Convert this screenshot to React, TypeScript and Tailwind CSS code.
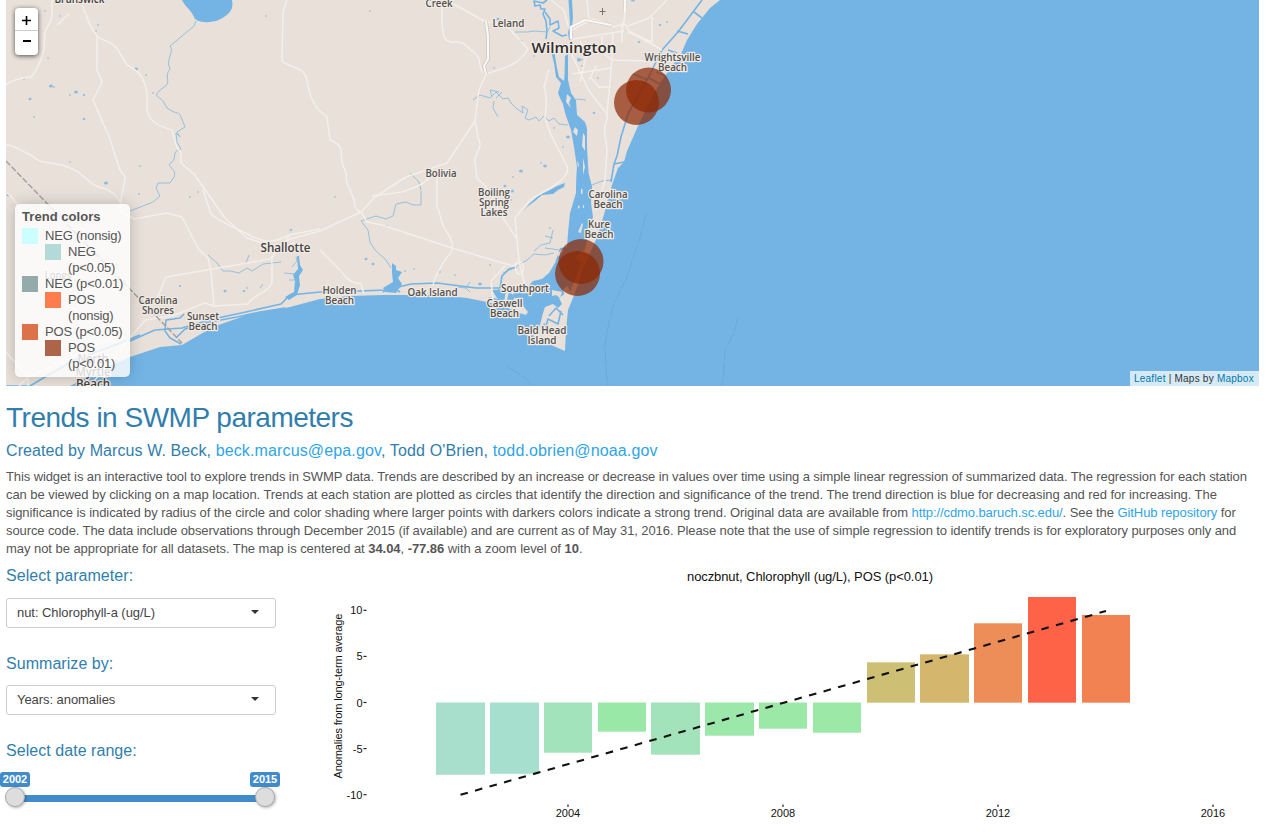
import React from "react";

const SANS = "font-['Liberation_Sans',Arial,sans-serif]";

const roads: string[] = [
  "M6 85 C14 79 18 79 31 77 C38 70 42 57 44 49 L45 32 C48 24 52 22 52 14 V0",
  "M82 5 L90 25 L97 36 C103 42 112 40 118 50 L127 65 C137 70 145 76 147 95 L147 110 C149 122 160 127 172 130 C176 140 174 147 181 152 V163 L194 174 L225 218 L247 238 L276 248 L290 239 L320 231 L361 212 L375 197 L406 177 L447 163 L475 121 L479 90 L486 74",
  "M97 36 L97 70 L102 82 L93 100 L110 139 L114 152 L120 170 L125 177 C125 188 119 196 121 212 L134 219 L167 213 L182 217 L199 250 L208 258 L211 272 L214 306 L248 304",
  "M6 145 C16 145 20 151 31 155 C41 166 54 160 70 168 C82 171 88 184 99 187 C111 190 117 195 121 204",
  "M287 0 L283 12 L282 61 C292 69 304 66 307 80 C309 94 314 106 321 112 L327 117 L330 140 C346 146 339 154 343 166 C350 177 343 181 349 187 L354 200 C355 210 359 212 361 212 L367 222 L382 225 L452 248 L513 266 L517 262",
  "M203 190 L211 214 C224 225 241 230 251 236 C264 242 272 244 289 235 L320 229",
  "M155 304 L166 277 L270 259 L290 235",
  "M248 304 C252 295 267 294 272 283 V264 C270 252 280 252 294 242",
  "M90 386 L130 338 L145 320 L172 316 L205 303 L214 306",
  "M442 6 V19 C443 32 442 42 453 42 C465 40 468 49 477 55 C482 62 477 70 486 74",
  "M452 3 L484 21 L506 25 L528 49",
  "M486 74 C499 69 518 67 528 49",
  "M475 121 L478 137 C484 150 475 149 475 162 L477 178 L486 187 L503 218 L517 239 L519 261 L525 286",
  "M517 239 L515 218 L530 200 L555 185 C563 180 570 172 567 166 L551 135 L545 118 C546 106 548 99 544 87 L549 69",
  "M437 175 V206 C441 215 440 221 445 229 C452 240 454 244 451 252 L443 263 C440 270 434 276 433 286",
  "M372 196 L402 192 C413 188 429 184 433 171",
  "M320 250 L339 269 C345 275 346 282 361 284 L364 294",
  "M505 266 L491 281 L493 300",
  "M551 0 L564 10 L568 26 L572 30 L592 19 L609 24",
  "M587 0 L589 20 M622 23 L622 43 M573 39 L624 31",
  "M612 27 L625 24 L629 31 L662 50",
  "M667 0 L649 18 L628 26",
  "M652 17 V42 L628 32",
  "M625 0 V13 L623 27",
  "M571 53 L589 91 L607 114 L607 120 C602 130 606 137 607 149 L605 180 L596 210",
  "M607 114 L612 59 L613 32",
  "M580 41 L587 53 L580 82 M602 36 V52 L612 60 L649 61",
  "M572 74 L611 68 M591 78 L599 87 H611 M589 80 L596 66",
  "M6 352 L28 377 L19 386 M28 377 V386 M28 377 L69 359 L120 333",
  "M69 14 L57 25 M7 193 C17 200 19 210 23 218",
];

const creeks: string[] = [
  "M196 21 L194 26 L170 46 C175 52 165 59 170 69 C163 77 173 82 163 88 C150 97 161 97 163 101 L167 108 C177 115 179 111 181 117 L185 127 L177 132 L180 137 L176 133 L177 142 L181 149 C171 151 177 158 172 162 C164 166 178 169 174 177 L170 183 L158 183 L156 188 L160 196 L153 202 L130 211",
  "M473 100 L480 95 L490 98 L496 92 L503 99 L508 98 L511 103 L516 108 L523 113 L522 106 L528 110 L525 118 L529 120 L536 117 L539 121 L544 116 L549 121 L554 118 L559 124 L568 125",
  "M494 101 L493 108 L498 117 M492 97 L490 90 L499 92 M496 98 L502 92",
  "M421 191 L421 205 L413 205 L406 202 L396 204 L393 216 L386 219 L376 216 L361 221 L368 230 L370 242 L375 250 L386 260 L391 268",
  "M410 173 L419 182 L421 190",
  "M515 32 L527 32 L535 31 L547 32 L550 27",
  "M592 185 L602 181 L612 180",
  "M208 255 L217 263 L223 271 L230 271 L239 273 L247 268 L252 271 L263 264 L281 262 M246 263 L249 255",
  "M296 257 L297 261 L292 267 M289 280 H299 M284 273 L294 274 M263 284 L260 288",
  "M503 273 L514 268 L527 260 L534 254 L545 255 L554 253",
  "M534 251 L541 245 L550 243 L553 230 M545 248 L559 250 M545 236 L553 238",
  "M470 282 L466 288 L470 292 M455 287 L466 288",
  "M577 58 L583 60 M576 99 L586 100",
];

const channels: string[] = [
  "M130 341 L155 330 L182 328 L213 319 L246 312 L281 304 L290 295 L320 292 L360 291 L386 290 L411 284 L437 283 L476 288 L500 288",
  "M176 338 L185 329 L210 322 L237 317 L260 312 L285 308",
  "M165 331 L166 320 L180 318 L184 314",
  "M165 331 L170 338 L181 344",
  "M383 292 L392 287 L400 292 M385 290 L399 288",
  "M500 288 L502 276 L509 269 L517 267",
  "M506 288 L503 300 L513 307 L520 303 M489 298 L500 300",
  "M702 0 L678 32 L662 50 L648 78 L634 103 L628 114 L621 137 L617 156 L614 164 L611 182",
  "M677 31 L688 34 M694 12 L702 18 M668 50 L677 53 M656 72 L666 76 M649 78 L660 84 M633 74 L648 80",
  "M614 164 L624 162",
  "M547 0 L543 3 L534 1 L535 6 L540 5 L541 9 L545 9 L543 14 L546 21 L547 32 L546 39",
  "M545 12 L550 19 L550 25 L558 21 L559 28 L553 31 L562 36 L567 35",
  "M6 386 L30 386 L50 374 L75 360 L115 345 L140 335",
  "M545 330 L548 319 L558 324 L561 311 M549 316 L556 308 L563 315 M541 327 L545 324",
];

const lakes: string[] = [
  "M182 0 C186 8 191 9 195 19 C202 24 216 23 224 17 C233 11 233 6 232 0 Z",
  "M565 183 L564 187 L558 190 L553 194 L542 195 L535 201 L527 207 L522 213 L529 204 L539 195 L550 190 L557 186 Z",
  "M297 256 L299 256 L300 265 L303 270 L299 276 L300 285 L297 295 L289 300 L285 297 L294 292 L295 281 L293 275 L298 269 Z",
  "M392 263 L396 266 L396 270 L402 272 L398 278 L402 284 L396 293 L386 292 L383 288 L393 282 L392 273 Z",
  "M568.5 0 H572 L573 18 L571 34 L571 39 L569 40 L568 33 L570 24 Z",
  "M551.500 53 L554.500 53 L557 68 L559 77 L564 81 L564.500 75 L565 56 L568 54 L568 80 L571 93 L576 100 L577 115 L585 122 L587 128 L587 147 L588.500 173 L592 187 L588 200 L576 193 L577 167 L574 147 L571 130 L565 113 L563 104 L560 98 L558 93 L561 83 L556 77 L554 63 Z",
];

const islands: string[] = [
  "M567 94 L571 98 L569 103 L571 108 L566 102 Z",
  "M575 127 L578 130 L577 136 L573 132 Z",
  "M583 133 L585 136 L585 151 L582 146 Z",
  "M583 158 L585 167 L583 175 Z",
  "M577 160 L579 165 L578 168 Z",
  "M582 223 L583 224 L581 233 L578 232 Z",
  "M578 205 L580 207 L578 209 Z",
  "M581 189 H582.500 V194 H581 Z M583 205 H584 V208 H583 Z",
  "M581 252 L587 249 L588 255 L580 262 L575 259 Z",
  "M577 269 L581 271 L578 273 Z",
  "M557 254 L563 249 L564 251 L559 257 Z",
  "M563 289 L568 286 L570 293 L565 297 Z",
  "M552 290 L562 292 L560 298 L556 295 L552 296 Z",
];

const specks: [number, number, number][] = [
  [136, 69, 2], [146, 75, 1], [98, 25, 1], [96, 31, 0.8], [45, 11, 1], [60, 16, 0.8], [51, 86, 2], [54, 87, 1],
  [76, 92, 2], [84, 95, 1.2], [70, 95, 1], [30, 99, 1.5], [34, 117, 1], [84, 119, 1.4], [48, 58, 0.8], [24, 79, 1],
  [153, 93, 1], [140, 166, 1], [70, 162, 0.8], [106, 183, 2], [139, 194, 1], [190, 197, 1], [198, 192, 1], [266, 16, 1],
  [8, 195, 1.5], [79, 297, 2.5], [180, 286, 1.2], [225, 291, 1.5], [244, 291, 1.4], [247, 288, 1], [291, 230, 1.3],
  [335, 197, 1], [370, 11, 0.8], [366, 259, 1.5], [373, 264, 1.5], [387, 226, 1], [405, 271, 1], [414, 269, 0.8],
  [440, 272, 1], [490, 265, 1], [521, 171, 2], [513, 177, 1], [545, 166, 1.8], [541, 163, 1], [505, 186, 1.5],
  [512, 191, 2], [511, 200, 1], [494, 68, 1], [498, 19, 1.5], [521, 41, 1.3], [534, 56, 1], [568, 137, 2],
  [563, 147, 1], [594, 113, 1.3], [554, 128, 1], [660, 25, 1.3], [667, 22, 1], [639, 42, 1.3], [598, 78, 1],
  [579, 60, 2], [582, 66, 1], [550, 228, 1], [480, 284, 2], [455, 275, 1], [633, 0, 2],
];

type Place = { x: number; y: number; lines: string[]; widths: number[]; kind?: "city" | "town" };
const places: Place[] = [
  { x: 79.5, y: 2.5, lines: ["Brunswick"], widths: [50], kind: "town" },
  { x: 439, y: 7, lines: ["Creek"], widths: [27] },
  { x: 508.5, y: 27, lines: ["Leland"], widths: [32] },
  { x: 574, y: 53, lines: ["Wilmington"], widths: [85], kind: "city" },
  { x: 672.5, y: 60.5, lines: ["Wrightsville", "Beach"], widths: [56, 29] },
  { x: 441, y: 176.5, lines: ["Bolivia"], widths: [31] },
  { x: 494, y: 196, lines: ["Boiling", "Spring", "Lakes"], widths: [32, 30, 27] },
  { x: 608, y: 197.5, lines: ["Carolina", "Beach"], widths: [39, 29] },
  { x: 599, y: 227.5, lines: ["Kure", "Beach"], widths: [22, 29] },
  { x: 285.5, y: 251.5, lines: ["Shallotte"], widths: [50], kind: "town" },
  { x: 158, y: 303.5, lines: ["Carolina", "Shores"], widths: [39, 32] },
  { x: 203, y: 319.5, lines: ["Sunset", "Beach"], widths: [32, 29] },
  { x: 339.5, y: 293.5, lines: ["Holden", "Beach"], widths: [34, 29] },
  { x: 432.5, y: 296, lines: ["Oak Island"], widths: [50] },
  { x: 525, y: 292, lines: ["Southport"], widths: [48] },
  { x: 504.5, y: 307, lines: ["Caswell", "Beach"], widths: [36, 29] },
  { x: 542, y: 334, lines: ["Bald Head", "Island"], widths: [49, 29] },
  { x: 58, y: 279, lines: ["Longs"], widths: [27] },
  { x: 93, y: 363, lines: ["North", "Myrtle", "Beach"], widths: [31, 35, 34], kind: "town" },
];

const stations: [number, number][] = [[648.5, 90], [636.5, 102.5], [581, 261.5], [577.5, 273.5]];

const labelStyle = {
  city: { size: 15, weight: 600, fill: "#302d2b" },
  town: { size: 12, weight: 600, fill: "#46423f" },
  village: { size: 10.3, weight: 600, fill: "#55514e" },
};

function CoastMap() {
  return (
    <svg className="block h-[386px] w-[1253px]" viewBox="6 0 1253 386">
      <rect x="6" width="1253" height="386" fill="#73b4e5" />
      <path
        fill="#e8e0d9"
        d="M6 0 H720 L710 8 L697 24 L687 40 L681 54 L672 66 L660 83 L650 101 L638 126 L627 151 L624 162 L618 168 L612 185 L608 199 L605 211 L598 235 L591 251 L583 270 L575 293 L568 310 L566 330 L565 351 L551 345 L533 336 L540 325 L543 313 L545 307 L553 304 L558 308 L562 304 L559 298 L566 293 L571 290 L579 268 L585 249 L593 217 L591 203 L592 187 L588 173 L577 165 L576 193 L570 213 L568 233 L567 247 L560 248 L555 263 L549 273 L542 279 L533 281 L525 290 L514 292 L513 297 L520 300 L524 307 L528 312 L526 315 L519 313 L506 307 L487 302 L467 298 L437 295 L383 295 L350 296 L320 299 L290 307 L250 314 L213 327 L182 345 L160 347 L130 357 L100 370 L70 386 H6 Z"
      />
      <g fill="none" stroke="#94c1df" strokeWidth="1" strokeLinejoin="round">
        {creeks.map((d) => <path key={d} d={d} />)}
      </g>
      <g fill="none" stroke="#73b4e5" strokeWidth="1.6" strokeLinejoin="round">
        {channels.map((d) => <path key={d} d={d} />)}
      </g>
      <g fill="#73b4e5">
        {lakes.map((d) => <path key={d} d={d} />)}
        {specks.map(([x, y, r]) => <ellipse key={`${x}-${y}`} cx={x} cy={y} rx={r} ry={r * 0.8} opacity="0.8" />)}
        <path d="M492 290 L506 289 L504 302 L497 298 Z M509 292 L515 296 L512 303 L507 300 Z" />
      </g>
      <g fill="#e8e0d9">
        {islands.map((d) => <path key={d} d={d} />)}
      </g>
      <g fill="none" stroke="#f4efea" strokeWidth="1.5" strokeLinejoin="round">
        {roads.map((d) => <path key={d} d={d} />)}
        <ellipse cx="519.500" cy="268" rx="4" ry="6" />
      </g>
      <g fill="none" strokeLinejoin="round">
        <path d="M486 21 L488 37 V59 L484 66 L486 74" stroke="#c4beb8" strokeWidth="3.400" />
        <path d="M486 21 L488 37 V59 L484 66 L486 74" stroke="#faf8f5" strokeWidth="2.200" />
        <path d="M571 39 L571 27 L585 20 L611 25 M625 0 V12" stroke="#cec7c0" strokeWidth="3" />
        <path d="M571 39 L571 27 L585 20 L611 25 M625 0 V12" stroke="#fbf9f7" strokeWidth="2.200" />
      </g>
      <path d="M6 161 L182 343" stroke="#a19f9c" strokeWidth="1.4" strokeDasharray="6 2" fill="none" />
      <g stroke="#6aa9da" strokeWidth="1" fill="none" strokeDasharray="14 2">
        <path d="M646 214 L640 238 L633 257 L628 275 L614 304 L609 322 L605 345 L606 370 L608 386" />
        <path d="M738 318 L733 335 L725 350 L724 369 L722 386" />
        <path d="M508 367 L518 373 L529 381 L531 386" />
      </g>
      <path d="M602.500 8 V15 M599.500 11.500 H605.500" stroke="#77716b" strokeWidth="1" />
      <g
        fontFamily="'Open Sans','Noto Sans',sans-serif"
        textAnchor="middle"
        stroke="#f0ebe6"
        strokeWidth="2.500"
        strokeLinejoin="round"
        style={{ paintOrder: "stroke" }}
      >
        {places.map((p) => {
          const look = labelStyle[p.kind ?? "village"];
          return p.lines.map((line, i) => (
            <text
              key={`${p.x}-${line}`}
              x={p.x}
              y={p.y + i * (p.kind === "town" ? 12.5 : 10)}
              fontSize={look.size}
              fontWeight={look.weight}
              fill={look.fill}
              textLength={p.widths[i]}
              lengthAdjust="spacingAndGlyphs"
            >
              {line}
            </text>
          ));
        })}
      </g>
      <g fill="#8b2500" fillOpacity="0.7">
        {stations.map(([cx, cy]) => <circle key={cx} cx={cx} cy={cy} r="22.500" />)}
      </g>
    </svg>
  );
}

const legend: { color: string; lines: string[]; indent: boolean }[] = [
  { color: "bg-[#cbffff]", lines: ["NEG (nonsig)"], indent: false },
  { color: "bg-[#b3d9d9]", lines: ["NEG", "(p<0.05)"], indent: true },
  { color: "bg-[#93abab]", lines: ["NEG (p<0.01)"], indent: false },
  { color: "bg-[#ff7d4d]", lines: ["POS", "(nonsig)"], indent: true },
  { color: "bg-[#dc724a]", lines: ["POS (p<0.05)"], indent: false },
  { color: "bg-[#ad6449]", lines: ["POS", "(p<0.01)"], indent: true },
];

function Legend() {
  return (
    <div className="absolute left-[9px] top-[204px] h-[173px] w-[115px] rounded-[5px] bg-white/80 px-[7px] pt-1 text-[13px] leading-4 tracking-[-0.2px] text-[#555] shadow-[0_0_15px_rgba(0,0,0,0.2)]">
      <div className="h-5 pt-px font-bold tracking-[0.05px]">Trend colors</div>
      {legend.map((row) => (
        <div key={row.color} className={row.indent ? "flex gap-[7px] pl-[23px]" : "flex gap-[7px]"}>
          <span className={`size-4 shrink-0 ${row.color}`} />
          <span className="whitespace-nowrap">
            {row.lines.map((l) => <span key={l} className="block">{l}</span>)}
          </span>
        </div>
      ))}
    </div>
  );
}

const bars: [number, number, number, string][] = [
  [436, 702.5, 72.3, "#a8dfcc"],
  [490, 702.5, 71.3, "#a7dfce"],
  [544, 702.5, 50.2, "#a2e3bb"],
  [598, 702.5, 29.2, "#9ae8a8"],
  [651, 702.5, 52.2, "#a2e3bb"],
  [705, 702.5, 33.2, "#9be8aa"],
  [759, 702.5, 26.2, "#9be8a7"],
  [813, 702.5, 30.2, "#9be8a7"],
  [867, 662.3, 40.4, "#cdbf73"],
  [920, 654.3, 48.4, "#d4b66d"],
  [974, 623.3, 79.4, "#ed8d58"],
  [1028, 597, 105.7, "#ff6347"],
  [1082, 615, 87.7, "#f38253"],
];
const wideBars = [436, 490, 651, 705, 920];

function AnomalyChart() {
  return (
    <svg
      className="block h-[266px] w-[946px]"
      viewBox="320 566 946 266"
      fontFamily="'Liberation Sans',Arial,sans-serif"
      fontSize="11"
      fill="#111"
    >
      <text x="687" y="581" fontSize="13" textLength="246">noczbnut, Chlorophyll (ug/L), POS (p&lt;0.01)</text>
      <text transform="translate(341.500 778.500) rotate(-90)" textLength="165">Anomalies from long-term average</text>
      {[10, 5, 0, -5, -10].map((v) => (
        <g key={v}>
          <text x="362.500" y={706.5 - v * 9.22} textAnchor="end">{v}</text>
          <path d={`M363.500 ${702.5 - v * 9.22} h3`} stroke="#222" strokeWidth="1.200" />
        </g>
      ))}
      {[2004, 2008, 2012, 2016].map((year) => (
        <g key={year}>
          <path d={`M${568 + (year - 2004) * 53.75} 804.500 v2.500`} stroke="#222" strokeWidth="1.200" />
          <text x={568 + (year - 2004) * 53.75} y="817" textAnchor="middle">{year}</text>
        </g>
      ))}
      {bars.map(([x, y, h, fill]) => (
        <rect key={x} x={x} y={y} width={wideBars.includes(x) ? 49 : 48} height={h} fill={fill} />
      ))}
      <path d="M460.500 794.800 L1106 611" stroke="#111" strokeWidth="2.100" strokeDasharray="7.600 7.500" fill="none" />
    </svg>
  );
}

function Select({ value }: { value: string }) {
  return (
    <div className="flex h-[30px] w-[270px] items-center justify-between rounded-[3px] border border-[#ccc] pl-[10px] pr-4 text-[13px] tracking-[-0.06px] text-[#444]">
      <span className="-mt-px">{value}</span>
      <span className="-mt-0.5 size-0 border-x-4 border-t-4 border-x-transparent border-t-[#333]" />
    </div>
  );
}

function SliderHandle({ year }: { year: number }) {
  return (
    <div className="flex w-[30px] flex-col items-center">
      <span className="rounded-[3px] bg-[#428bca] px-[3px] text-[11px] font-bold leading-[15px] text-white">{year}</span>
      <span className="size-5 rounded-full border border-[#aaa] bg-[#ddd] shadow-[1px_1px_3px_rgba(0,0,0,0.3)]" />
    </div>
  );
}

function Controls() {
  const heading = "text-[16px] leading-[18px] tracking-[0.05px] text-[#317eac]";
  return (
    <div className="w-[314px] shrink-0">
      <h4 className={heading}>Select parameter:</h4>
      <div className="mt-[13px]"><Select value="nut: Chlorophyll-a (ug/L)" /></div>
      <h4 className={`mt-[27px] ${heading}`}>Summarize by:</h4>
      <div className="mt-[12px]"><Select value="Years: anomalies" /></div>
      <h4 className={`mt-[27px] ${heading}`}>Select date range:</h4>
      <div className="relative -ml-[6px] mt-[12px] flex w-[280px] justify-between">
        <div className="absolute left-[15px] top-[23px] h-[7px] w-[250px] bg-[#428bca]" />
        <div className="relative flex w-full justify-between">
          <SliderHandle year={2002} />
          <SliderHandle year={2015} />
        </div>
      </div>
    </div>
  );
}

const link = "text-[#2fa4e7]";

export default function App() {
  return (
    <main className={`h-[832px] w-[1266px] overflow-hidden bg-white pl-[6px] ${SANS} text-[#555]`}>
      <section className="relative h-[386px] w-[1253px] overflow-hidden">
        <CoastMap />
        <div className="absolute left-[9px] top-[8px] flex h-[47px] w-[23px] flex-col rounded bg-white text-black shadow-[0_1px_5px_rgba(0,0,0,0.65)]">
          <button className="flex h-[23px] items-center justify-center border-b border-[#ccc] pt-0.5">
            <svg className="size-[9px]" viewBox="0 0 9 9"><path d="M4.500 0 V9 M0 4.500 H9" stroke="black" strokeWidth="1.600" /></svg>
          </button>
          <button className="flex h-[21px] items-center justify-center">
            <svg className="h-[9px] w-2" viewBox="0 0 8 9"><path d="M0 4 H8" stroke="black" strokeWidth="2" /></svg>
          </button>
        </div>
        <Legend />
        <div className="absolute bottom-0 right-0 h-[15px] w-[129px] whitespace-nowrap bg-white/70 pl-1 text-[10px] leading-[15px] tracking-[0.23px] text-[#333]">
          <a className="text-[#0078a8]">Leaflet</a> | Maps by <a className="text-[#0078a8]">Mapbox</a>
        </div>
      </section>
      <h2 className="mt-4 whitespace-nowrap text-[28px] leading-[31px] tracking-[-0.5px] text-[#317eac]">Trends in SWMP parameters</h2>
      <h4 className="mt-[9px] whitespace-nowrap text-[16px] leading-[18px] tracking-[0.14px] text-[#317eac]">
        <span className="tracking-[0.09px]">Created by Marcus W. Beck, </span><a className={link}>beck.marcus@epa.gov</a>, Todd O'Brien, <a className={link}>todd.obrien@noaa.gov</a>
      </h4>
      <p className="mt-2 whitespace-nowrap text-[13px] leading-[18px]">
        <span className="tracking-[-0.103px]">This widget is an interactive tool to explore trends in SWMP data. Trends are described by an increase or decrease in values over time using a simple linear regression of summarized data. The regression for each station</span><br />
        <span className="tracking-[-0.055px]">can be viewed by clicking on a map location. Trends at each station are plotted as circles that identify the direction and significance of the trend. The trend direction is blue for decreasing and red for increasing. The</span><br />
        <span className="tracking-[-0.082px]">significance is indicated by radius of the circle and color shading where larger points with darkers colors indicate a strong trend. Original data are available from <a className={link}>http://cdmo.baruch.sc.edu/</a>. See the <a className={link}>GitHub repository</a> for</span><br />
        <span className="tracking-[-0.095px]">source code. The data include observations through December 2015 (if available) and are current as of May 31, 2016. Please note that the use of simple regression to identify trends is for exploratory purposes only and</span><br />
        <span className="tracking-[-0.05px]">may not be appropriate for all datasets. The map is centered at <b>34.04</b>, <b>-77.86</b> with a zoom level of <b>10</b>.</span>
      </p>
      <section className="flex pt-[8px]">
        <div className="pt-px"><Controls /></div>
        <AnomalyChart />
      </section>
    </main>
  );
}
